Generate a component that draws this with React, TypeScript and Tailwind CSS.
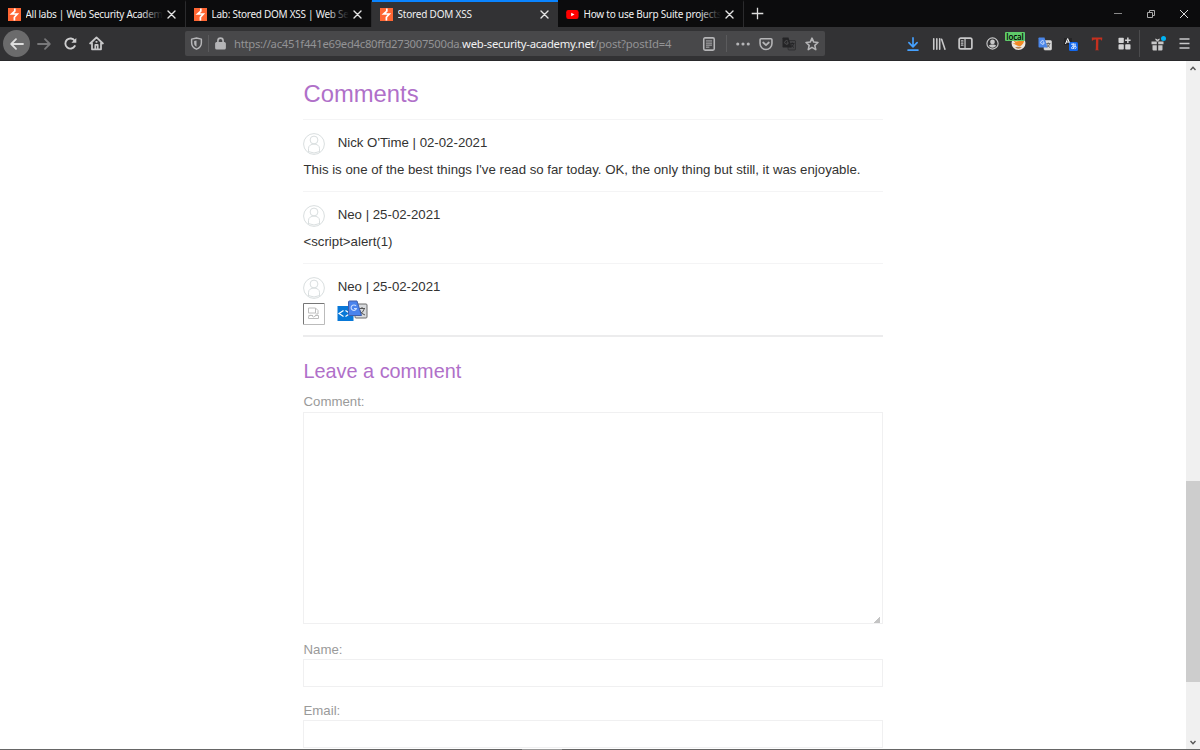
import type { ReactNode } from 'react';

function Glyph({ size = 16, children, box = 16, className = '' }: { size?: number; box?: number; children: ReactNode; className?: string }) {
  return (
    <svg width={size} height={size} viewBox={`0 0 ${box} ${box}`} fill="none" stroke="currentColor" strokeWidth="1.8" strokeLinecap="round" strokeLinejoin="round" className={`shrink-0 ${className}`}>
      {children}
    </svg>
  );
}

function BurpIcon() {
  return (
    <svg width="13" height="13" viewBox="0 0 13 13" className="shrink-0">
      <rect width="13" height="13" fill="#ff6633" />
      <path d="M6.8 .6V3.2L3.7 6H9.3L6.4 9.3V12.4" fill="none" stroke="#fff" strokeWidth="1.7" />
    </svg>
  );
}

function YouTubeIcon() {
  return (
    <svg width="13" height="13" viewBox="0 0 13 13" className="shrink-0">
      <rect x="0.2" y="2" width="12.4" height="9" rx="2.2" fill="#f00" />
      <path d="M5.2 4.7L8.5 6.5L5.2 8.3Z" fill="#fff" />
    </svg>
  );
}

function CloseIcon() {
  return (
    <svg width="9" height="9" viewBox="0 0 9 9" className="shrink-0" stroke="#e4e4e4" strokeWidth="1.4" strokeLinecap="round">
      <path d="M1 1L8 8M8 1L1 8" />
    </svg>
  );
}

function Tab({ icon, title, active = false, fade = false, spacing }: { icon: ReactNode; title: string; active?: boolean; fade?: boolean; spacing: string }) {
  return (
    <div className={`flex h-[27px] w-[186px] shrink-0 items-center border-t-2 pl-[7.5px] pr-[9px] ${active ? 'border-[#0a84ff] bg-[#323234]' : 'border-[#0c0c0d] border-r border-r-[#2b2b2d] bg-[#0c0c0d]'}`}>
      {icon}
      <div className="relative ml-[5px] h-[16px] min-w-0 flex-1 overflow-hidden">
        <span className={`block whitespace-nowrap leading-[15px] text-[#f0f0f1] ${spacing}`}>{title}</span>
        {fade && <span className="absolute inset-y-0 right-0 w-[22px] bg-linear-to-r from-transparent to-[#0c0c0d]" />}
      </div>
      <div className="ml-[4px] flex"><CloseIcon /></div>
    </div>
  );
}

function Slot({ w, children }: { w: string; children: ReactNode }) {
  return <div className={`flex h-full shrink-0 items-center justify-center ${w}`}>{children}</div>;
}

function TranslateIcon({ dim = false }: { dim?: boolean }) {
  return (
    <svg width="14" height="14" viewBox="0 0 14 14" className="shrink-0">
      <rect x="6" y="3.5" width="7.5" height="9.5" rx="1" fill={dim ? '#434345' : '#d8d8d8'} stroke={dim ? '#242426' : '#d8d8d8'} strokeWidth=".6" />
      <path d="M8.3 6.5H12.3M10.3 5.5V6.5M11.8 6.5Q11 9.5 8.8 10.2M9 7.2Q10 9.5 12 10.5" stroke={dim ? '#242426' : '#616161'} strokeWidth=".9" fill="none" />
      <path d="M1.2 .5H6.5L9.5 10.5H1.2Q.5 10.5 .5 9.7V1.2Q.5 .5 1.2 .5Z" fill={dim ? '#242426' : '#4a86e8'} />
      <path d="M6 4.4A1.8 1.8 0 1 0 6.3 5.8H4.7" stroke={dim ? '#59595b' : '#e8f0ff'} strokeWidth=".8" fill="none" />
    </svg>
  );
}

function NavBar() {
  return (
    <div className="flex h-[34px] items-center border-b border-[#29292b] bg-[#323234] text-[#c8c8c9]">
      <Slot w="w-[33px]">
        <div className="flex size-[27px] items-center justify-center rounded-full bg-[#6b6b6c] text-[#dedede]">
          <Glyph><path d="M14 8H2.3M7 3.2L2.2 8L7 12.8" /></Glyph>
        </div>
      </Slot>
      <Slot w="w-[22px]"><Glyph className="text-[#78787a]"><path d="M2 8H13.7M9 3.2L13.8 8L9 12.8" /></Glyph></Slot>
      <Slot w="w-[31px]"><Glyph size={15} className="text-[#cfcfd0]"><path d="M12.6 10.7A5.4 5.4 0 1 1 12.4 5" strokeWidth="2" /><path d="M14.2 2V7.3H8.9Z" fill="currentColor" stroke="none" /></Glyph></Slot>
      <Slot w="w-[21px]"><Glyph size={15}><path d="M1.2 8L8 1.5L14.8 8M3.2 7.5V14.2H12.8V7.5" strokeWidth="1.9" /><path d="M6.7 14V9.5H9.3V14M7.7 6.2H8.3" /></Glyph></Slot>
      <div className="ml-[78px] flex h-[25px] w-[640px] items-center rounded-[2px] bg-[#48484a] text-[#b5b5b7]">
        <Slot w="w-[23px]"><Glyph size={13}><path d="M8 1.2L14 2.6V7C14 11 11.8 13.5 8 15C4.2 13.5 2 11 2 7V2.6Z" /><path d="M8 4.3V12C6 10.8 5.1 9.5 5.1 7.3V4.8Z" fill="currentColor" stroke="none" /></Glyph></Slot>
        <div className="h-[17px] w-px bg-[#5b5b5d]" />
        <Slot w="w-[23px]"><Glyph size={13}><rect x="2.3" y="7" width="11.4" height="7.4" rx="1" fill="currentColor" /><path d="M4.8 7V4.6A3.2 3.2 0 0 1 11.2 4.6V7" strokeWidth="2" /></Glyph></Slot>
        <div className="ml-[2px] w-[463px] whitespace-nowrap pt-px text-[11.3px] leading-[20px] text-[#939395]"><span className="tracking-[-0.29px]">https://ac451f441e69ed4c80ffd273007500da.</span><span className="tracking-[-0.27px] text-[#f1f1f2]">web-security-academy.net</span><span className="tracking-[-0.17px]">/post?postId=4</span></div>
        <Slot w="w-[23px]"><Glyph size={14}><rect x="2" y="1" width="12" height="14" rx="1.5" /><path d="M5 4.5H11M5 7H11M5 9.3H11M5 11.6H8" strokeWidth="1.1" /></Glyph></Slot>
        <div className="ml-[6px] h-[17px] w-px bg-[#5b5b5d]" />
        <Slot w="w-[32px]"><Glyph size={14}><g fill="currentColor" stroke="none"><circle cx="2" cy="8" r="1.8" /><circle cx="8" cy="8" r="1.8" /><circle cx="14" cy="8" r="1.8" /></g></Glyph></Slot>
        <Slot w="w-[14px]"><Glyph size={14}><path d="M2.4 2H13.6Q14.8 2 14.8 3.2V7.5A6.8 6.8 0 0 1 1.2 7.5V3.2Q1.2 2 2.4 2Z" /><path d="M4.8 6.3L8 9.3L11.2 6.3" strokeWidth="2" /></Glyph></Slot>
        <Slot w="w-[32px]"><TranslateIcon dim /></Slot>
        <Slot w="w-[14px]"><Glyph size={14}><path d="M8 1.3L10 5.8L14.8 6.3L11.2 9.6L12.3 14.4L8 11.9L3.7 14.4L4.8 9.6L1.2 6.3L6 5.8Z" /></Glyph></Slot>
      </div>
      <div className="ml-[74px] flex h-full items-center">
        <Slot w="w-[27px]"><Glyph size={14} className="text-[#45a1ff]"><path d="M8 1V11M3.3 6.5L8 11.2L12.7 6.5M2.3 15H13.7" strokeWidth="1.9" /></Glyph></Slot>
        <Slot w="w-[26px]"><Glyph size={14}><path d="M2 2V14M5.5 2V14M8.8 2V14M11 2.5L14.8 14" strokeWidth="1.8" /></Glyph></Slot>
        <Slot w="w-[27px]"><Glyph size={15}><rect x="1.2" y="2.3" width="13.6" height="11.4" rx="1.8" /><path d="M7.5 2.5V13.5M3.6 5.2H5.3M3.6 7.5H5.3M3.6 9.8H5.3" strokeWidth="1.3" /></Glyph></Slot>
        <Slot w="w-[26px]"><Glyph size={13}><circle cx="8" cy="8" r="6.9" strokeWidth="1.4" /><circle cx="8" cy="6" r="2.9" fill="currentColor" stroke="none" /><path d="M3.3 10.8C5 8.8 11 8.8 12.7 10.8Q8 15.4 3.3 10.8Z" fill="currentColor" stroke="none" /></Glyph></Slot>
        <Slot w="w-[27px]">
          <div className="relative flex">
            <svg width="15" height="15" viewBox="0 0 15 15"><circle cx="7.5" cy="7" r="7" fill="#eee7df" /><path d="M2 4L5 5.5L8 5L13 2.5Q14 7.5 9 10.5L6 9.5L1.7 7.3L4.6 7.2Z" fill="#f28b25" /><path d="M4 11.2Q7 10.2 11 11.3Q7.5 14 4 11.2Z" fill="#b98453" /></svg>
            <span className="absolute -left-[6px] -top-[4px] flex h-[9px] w-[20px] items-center justify-center rounded-[1px] bg-[#5fcb6a] font-['Open_Sans'] text-[8px] font-semibold leading-[9px] tracking-[-0.1px] text-black">local</span>
          </div>
        </Slot>
        <Slot w="w-[26px]"><TranslateIcon /></Slot>
        <Slot w="w-[26px]"><svg width="14" height="14" viewBox="0 0 14 14"><path d="M0 1H8V8H0Z" fill="#252527" /><path d="M1.5 7L3.7 1.5L6 7M2.3 5H5.2" stroke="#fff" fill="none" /><rect x="5" y="5" width="9" height="9" rx="1.5" fill="#1267ee" /><path d="M7 7.2H12M9.2 6.2C9 8.6 9.1 10.8 10 12M11.4 8.4C10.5 11.6 7.5 12.4 7.5 11C7.5 8.7 12.4 8.1 12.2 10.3C12.1 11.3 11.4 11.8 10.8 12" stroke="#fff" strokeWidth=".8" fill="none" /></svg></Slot>
        <Slot w="w-[26px]"><svg width="12" height="14" viewBox="0 0 12 14"><path d="M.8 .6H11.3L11 4L9.8 2.5L7.4 2.3L7.2 12.5L8.2 13.3H4L4.8 12.5L5 2.4L2.6 2.7L.9 4Z" fill="#c5301f" /></svg></Slot>
        <Slot w="w-[28px]"><svg width="13" height="13" viewBox="0 0 13 13" fill="#d3d3d4"><rect x=".5" y=".8" width="5.3" height="5.3" rx=".8" /><rect x=".5" y="7.3" width="5.3" height="5.3" rx=".8" /><rect x="7.2" y="7.3" width="5.3" height="5.3" rx=".8" /><path d="M9.1 .6H10.6V2.6H12.6V4.1H10.6V6.1H9.1V4.1H7.1V2.6H9.1Z" /></svg></Slot>
        <div className="ml-[1px] h-[27px] w-px bg-[#4b4b4d]" />
        <Slot w="w-[35px]">
          <div className="relative flex">
            <svg width="13" height="14" viewBox="0 0 13 14" fill="#c7c7c8"><path d="M.5 4.5H5.8V7.3H.5ZM7.2 4.5H12.5V7.3H7.2ZM1.5 8.3H5.8V13.5H2.5Q1.5 13.5 1.5 12.5ZM7.2 8.3H11.5V12.5Q11.5 13.5 10.5 13.5H7.2Z" /><path d="M6.5 4.3Q6 2.2 4.4 2.2M6.5 4.3Q7 2.2 8.6 2.2" stroke="#c7c7c8" fill="none" strokeWidth="1.4" /></svg>
            <span className="absolute -right-[2px] -top-[1px] size-[5px] rounded-full bg-[#00b3f4]" />
          </div>
        </Slot>
        <Slot w="w-[18px]"><svg width="11" height="11" viewBox="0 0 11 11" stroke="#c8c8c9" strokeWidth="1.5"><path d="M.5 1H10.5M.5 5.5H10.5M.5 10H10.5" /></svg></Slot>
      </div>
    </div>
  );
}

function Comment({ author, children }: { author: string; children: ReactNode }) {
  return (
    <article className="h-[72.3px] border-t border-[#f4f4f5]">
      <div className="flex h-[35px] items-start pt-[13px]">
        <svg width="22" height="22" viewBox="0 0 22 22" fill="none" stroke="#d5dadb" strokeWidth=".9"><circle cx="11" cy="11" r="10.4" /><circle cx="11" cy="7" r="3.9" /><path d="M5.5 18.8V15.3C5.5 9.7 16.5 9.7 16.5 15.3V18.8M5.3 18.5Q11 21.5 16.7 18.5" /></svg>
        <span className="ml-[12.7px] text-[13.24px] leading-[19px]">{author}</span>
      </div>
      {children}
    </article>
  );
}

function TextComment({ children }: { children: ReactNode }) {
  return <p className="pl-[0.5px] pt-[5px] text-[13.24px] leading-[19px]">{children}</p>;
}

function Field({ label, gap }: { label: string; gap: string }) {
  return (
    <label className={`block text-[13.24px] leading-[18px] text-[#9a9a9a] ${gap}`}>
      <span className="pl-[0.5px]">{label}</span>
      <input className="block h-[28px] w-full border border-[#f0f0f1] bg-white outline-none" />
    </label>
  );
}

export default function App() {
  return (
    <div className="flex h-[750px] w-[1200px] flex-col overflow-hidden bg-white font-['Noto_Sans',sans-serif]">
      <header className="shrink-0">
        <div className="flex h-[27px] bg-[#0c0c0d]">
          <Tab icon={<BurpIcon />} title="All labs | Web Security Academy" fade spacing="text-[10px] tracking-[-0.28px]" />
          <Tab icon={<BurpIcon />} title="Lab: Stored DOM XSS | Web Se" fade spacing="text-[10px] tracking-[-0.27px]" />
          <Tab icon={<BurpIcon />} title="Stored DOM XSS" active spacing="text-[10px] tracking-[-0.2px]" />
          <Tab icon={<YouTubeIcon />} title="How to use Burp Suite projects" fade spacing="text-[10px] tracking-[-0.22px]" />
          <svg width="13" height="13" viewBox="0 0 13 13" stroke="#ddd" strokeWidth="1.3" className="ml-[7px] mt-[7px]"><path d="M6.5 .7V12.3M.7 6.5H12.3" /></svg>
          <div className="ml-auto flex items-center gap-[25px] pr-[12px]">
            <svg width="8" height="8" stroke="#888"><path d="M0 3.5H8" /></svg>
            <svg width="8" height="8" stroke="#aaa" fill="none"><path d="M.5 2.5H5.5V7.5H.5ZM2.5 2V.5H7.5V5.5H6" /></svg>
            <svg width="8" height="8" stroke="#ddd"><path d="M0 0L8 8M8 0L0 8" /></svg>
          </div>
        </div>
        <NavBar />
      </header>
      <div className="flex min-h-0 flex-1">
        <main className="min-w-0 flex-1 overflow-hidden pl-[303px] font-['Liberation_Sans',Arial,sans-serif] text-[#333332]">
          <div className="w-[580px]">
            <h1 className="h-[57.5px] pl-[0.5px] pt-[16.5px] text-[23.8px] leading-[32px] text-[#b070c9]">Comments</h1>
            <Comment author="Nick O'Time | 02-02-2021"><TextComment>This is one of the best things I've read so far today. OK, the only thing but still, it was enjoyable.</TextComment></Comment>
            <Comment author="Neo | 25-02-2021"><TextComment>&lt;script&gt;alert(1)</TextComment></Comment>
            <Comment author="Neo | 25-02-2021">
              <div className="flex items-start pt-[4px]">
                <svg width="22" height="22" viewBox="0 0 22 22" fill="none"><path d="M.5 21.5V.5H21.5" stroke="#777" /><path d="M21.5 .5V21.5H.5" stroke="#bbb" /><path d="M5.5 5H12.5V10H5.5ZM12.5 5L15 7.5V11H12.5M5.5 12.5H10M12 12.5H15.5V15.5H5.5V13.5L8 12L10.5 14L13 12.5" stroke="#bebebe" /></svg>
                <svg width="31" height="23" viewBox="0 0 31 23" className="-mt-[3.5px] ml-[12px]" fill="none">
                  <rect x=".5" y="6" width="16" height="15" fill="#0878d8" /><path d="M6.5 10.5L2 13.5L6.5 16.5M8.5 10.5L13 13.5L8.5 16.5" stroke="#fff" strokeWidth="1.2" />
                  <rect x="18" y="4" width="12" height="14" rx="1" fill="#d8dadd" stroke="#6d6d6d" /><path d="M22 8.5H28M25 7V8.5M27.5 8.5Q26 13 22.5 14M22.5 10Q24 14 28 15" stroke="#555" />
                  <path d="M12.5 1H20L24.5 15.5H12.5Q11.5 15.5 11.5 14.5V2Q11.5 1 12.5 1Z" fill="#4a83ed" stroke="#405eaa" /><path d="M19 6A2.7 2.7 0 1 0 19.4 8.5H17" stroke="#cbdeff" strokeWidth="1.1" />
                </svg>
              </div>
            </Comment>
            <div className="h-[2px] bg-[#ececed]" />
            <h2 className="pl-[0.5px] pt-[20.7px] text-[19.85px] leading-[27px] text-[#b070c9]">Leave a comment</h2>
            <label className="mt-[8.3px] block text-[13.24px] leading-[18px] text-[#9a9a9a]"><span className="pl-[0.5px]">Comment:</span>
              <span className="relative mt-px block">
                <textarea className="block h-[212px] w-full resize-none border border-[#f0f0f1] bg-white outline-none" />
                <svg width="6" height="6" viewBox="0 0 6 6" className="absolute bottom-[1px] right-[3px]" fill="#c4c4c4"><path d="M5 0H6V6H0V5H1V4H2V3H3V2H4V1H5Z" /></svg>
              </span>
            </label>
            <Field label="Name:" gap="mt-[17px]" />
            <Field label="Email:" gap="mt-[15px]" />
          </div>
        </main>
        <aside className="flex w-[14px] flex-col items-center bg-[#f0f0f0]">
          <svg width="6" height="5" stroke="#555" fill="none" strokeWidth="1.4" className="mt-[5px]"><path d="M.5 4L3 1.3L5.5 4" /></svg>
          <div className="mt-[410px] h-[201px] w-full bg-[#cdcdcd]" />
          <svg width="6" height="5" stroke="#555" fill="none" strokeWidth="1.4" className="mb-[4px] mt-auto"><path d="M.5 1L3 3.7L5.5 1" /></svg>
        </aside>
      </div>
      <footer className="flex h-px shrink-0 bg-[#666]"><div className="ml-[522px] w-[40px] bg-[#999]" /></footer>
    </div>
  );
}
